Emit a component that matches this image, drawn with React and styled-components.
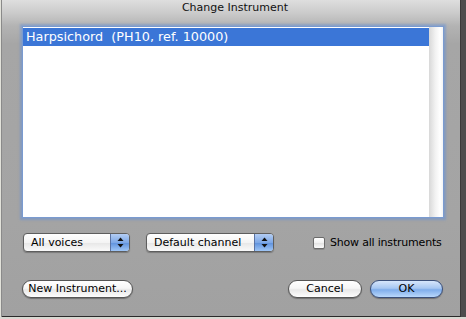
import React from "react";
import styled, { createGlobalStyle } from "styled-components";

const GlobalStyle = createGlobalStyle`
  html, body {
    margin: 0;
    padding: 0;
    background: #d9d9d2;
  }
  body {
    font-family: "Lucida Grande", "DejaVu Sans", sans-serif;
    -webkit-font-smoothing: antialiased;
  }
`;

const Desktop = styled.div`
  display: flex;
  width: 466px;
  height: 319px;
  overflow: hidden;
  background: #d9d9d2;
`;

const LeftEdge = styled.div`
  width: 2px;
  height: 317px;
  background: #e2e2da;
  border-right: 1px solid #8a8a8a;
  box-sizing: border-box;
`;

const RightEdge = styled.div`
  flex: 1;
  height: 317px;
  background: #4d4d4d;
`;

const Window = styled.div`
  display: flex;
  flex-direction: column;
  width: 459px;
  height: 317px;
  box-sizing: border-box;
  border-right: 1px solid #3a3a3a;
  border-bottom: 1px solid #2a2a2a;
  background: linear-gradient(
    #dedede 0px,
    #c9c9c9 14px,
    #b3b3b3 26px,
    #a6a6a6 44px,
    #a4a4a4 70%,
    #a1a1a1 100%
  );
`;

const TitleBar = styled.div`
  height: 19px;
  padding-top: 1px;
  padding-left: 8px;
  text-align: center;
  font-size: 11px;
  line-height: 14px;
  color: #111;
`;

const Body = styled.div`
  display: flex;
  flex-direction: column;
  padding: 7px 17px 0 21px;
`;

const ListBox = styled.div`
  display: flex;
  height: 190px;
  background: #fff;
  box-shadow: 0 0 0 1px #7a9bd0, 0 0 2px 3px rgba(104, 146, 214, 0.55);
`;

const Rows = styled.div`
  flex: 1;
  padding-top: 1px;
`;

const Row = styled.div`
  height: 18px;
  line-height: 18px;
  padding-left: 3px;
  font-size: 12.8px;
  white-space: pre;
  color: ${(p) => (p.$selected ? "#fff" : "#000")};
  background: ${(p) => (p.$selected ? "#3b76d7" : "transparent")};
`;

const ScrollTrack = styled.div`
  width: 14px;
  background: linear-gradient(to right, #d8d8d8, #f2f2f2 45%, #ffffff 80%, #f4f4f4);
`;

const ControlsRow = styled.div`
  display: flex;
  align-items: center;
  gap: 16px;
  margin-top: 16px;
  height: 19px;
`;

const Popup = styled.div`
  display: flex;
  flex-shrink: 0;
  width: ${(p) => p.$width}px;
  height: 19px;
  box-sizing: border-box;
  border: 1px solid #5e5e5e;
  border-radius: 4px;
  overflow: hidden;
  background: linear-gradient(#ffffff, #f4f4f4 50%, #e6e6e6 51%, #fafafa);
  box-shadow: 0 1px 1px rgba(0, 0, 0, 0.25);
`;

const PopupLabel = styled.div`
  flex: 1;
  padding-left: 7px;
  font-size: 11px;
  line-height: 17px;
  white-space: nowrap;
  color: #000;
`;

const Stepper = styled.div`
  width: 18px;
  display: flex;
  align-items: center;
  justify-content: center;
  border-left: 1px solid #5b73a3;
  background: linear-gradient(#b3cdf4, #7ea8e6 50%, #5d90dc 51%, #9fc6f6);
`;

const CheckGroup = styled.label`
  display: flex;
  align-items: center;
  gap: 5px;
  margin-left: 23px;
  font-size: 11px;
  letter-spacing: -0.2px;
  white-space: nowrap;
  color: #000;
`;

const CheckBox = styled.span`
  width: 12px;
  height: 12px;
  box-sizing: border-box;
  border: 1px solid #6b6b6b;
  border-radius: 2px;
  background: linear-gradient(#ffffff, #f0f0f0 50%, #e2e2e2 51%, #fafafa);
  box-shadow: 0 1px 0 rgba(0, 0, 0, 0.15);
`;

const ButtonRow = styled.div`
  display: flex;
  align-items: center;
  margin-top: 28px;
  margin-left: -1px;
`;

const Spacer = styled.div`
  flex: 1;
`;

const PillButton = styled.div`
  width: ${(p) => p.$width}px;
  height: 18px;
  box-sizing: border-box;
  margin-left: ${(p) => p.$gap || 0}px;
  border: 1px solid ${(p) => (p.$primary ? "#3a4f7a" : "#555")};
  border-radius: 9px;
  font-size: 11px;
  line-height: 16px;
  text-align: center;
  white-space: nowrap;
  color: #000;
  background: ${(p) =>
    p.$primary
      ? "linear-gradient(#d6e6fb, #a7c7f2 45%, #7fadeb 55%, #b9d8fb)"
      : "linear-gradient(#ffffff, #f6f6f6 45%, #e8e8e8 55%, #fdfdfd)"};
  box-shadow: 0 1px 1px rgba(0, 0, 0, 0.3);
`;

function Arrows() {
  return (
    <svg width="7" height="11" viewBox="0 0 7 11">
      <path d="M3.5 0.5 L6.5 4 L0.5 4 Z" fill="#111" />
      <path d="M3.5 10.5 L6.5 7 L0.5 7 Z" fill="#111" />
    </svg>
  );
}

function PopupButton({ label, width }) {
  return (
    <Popup $width={width}>
      <PopupLabel>{label}</PopupLabel>
      <Stepper>
        <Arrows />
      </Stepper>
    </Popup>
  );
}

export default function App() {
  return (
    <>
      <GlobalStyle />
      <Desktop>
        <LeftEdge />
        <Window>
          <TitleBar>Change Instrument</TitleBar>
          <Body>
            <ListBox>
              <Rows>
                <Row $selected>Harpsichord  (PH10, ref. 10000)</Row>
              </Rows>
              <ScrollTrack />
            </ListBox>

            <ControlsRow>
              <PopupButton label="All voices" width={107} />
              <PopupButton label="Default channel" width={128} />
              <CheckGroup>
                <CheckBox />
                Show all instruments
              </CheckGroup>
            </ControlsRow>

            <ButtonRow>
              <PillButton $width={111}>New Instrument...</PillButton>
              <Spacer />
              <PillButton $width={74}>Cancel</PillButton>
              <PillButton $width={73} $gap={8} $primary>
                OK
              </PillButton>
            </ButtonRow>
          </Body>
        </Window>
        <RightEdge />
      </Desktop>
    </>
  );
}
